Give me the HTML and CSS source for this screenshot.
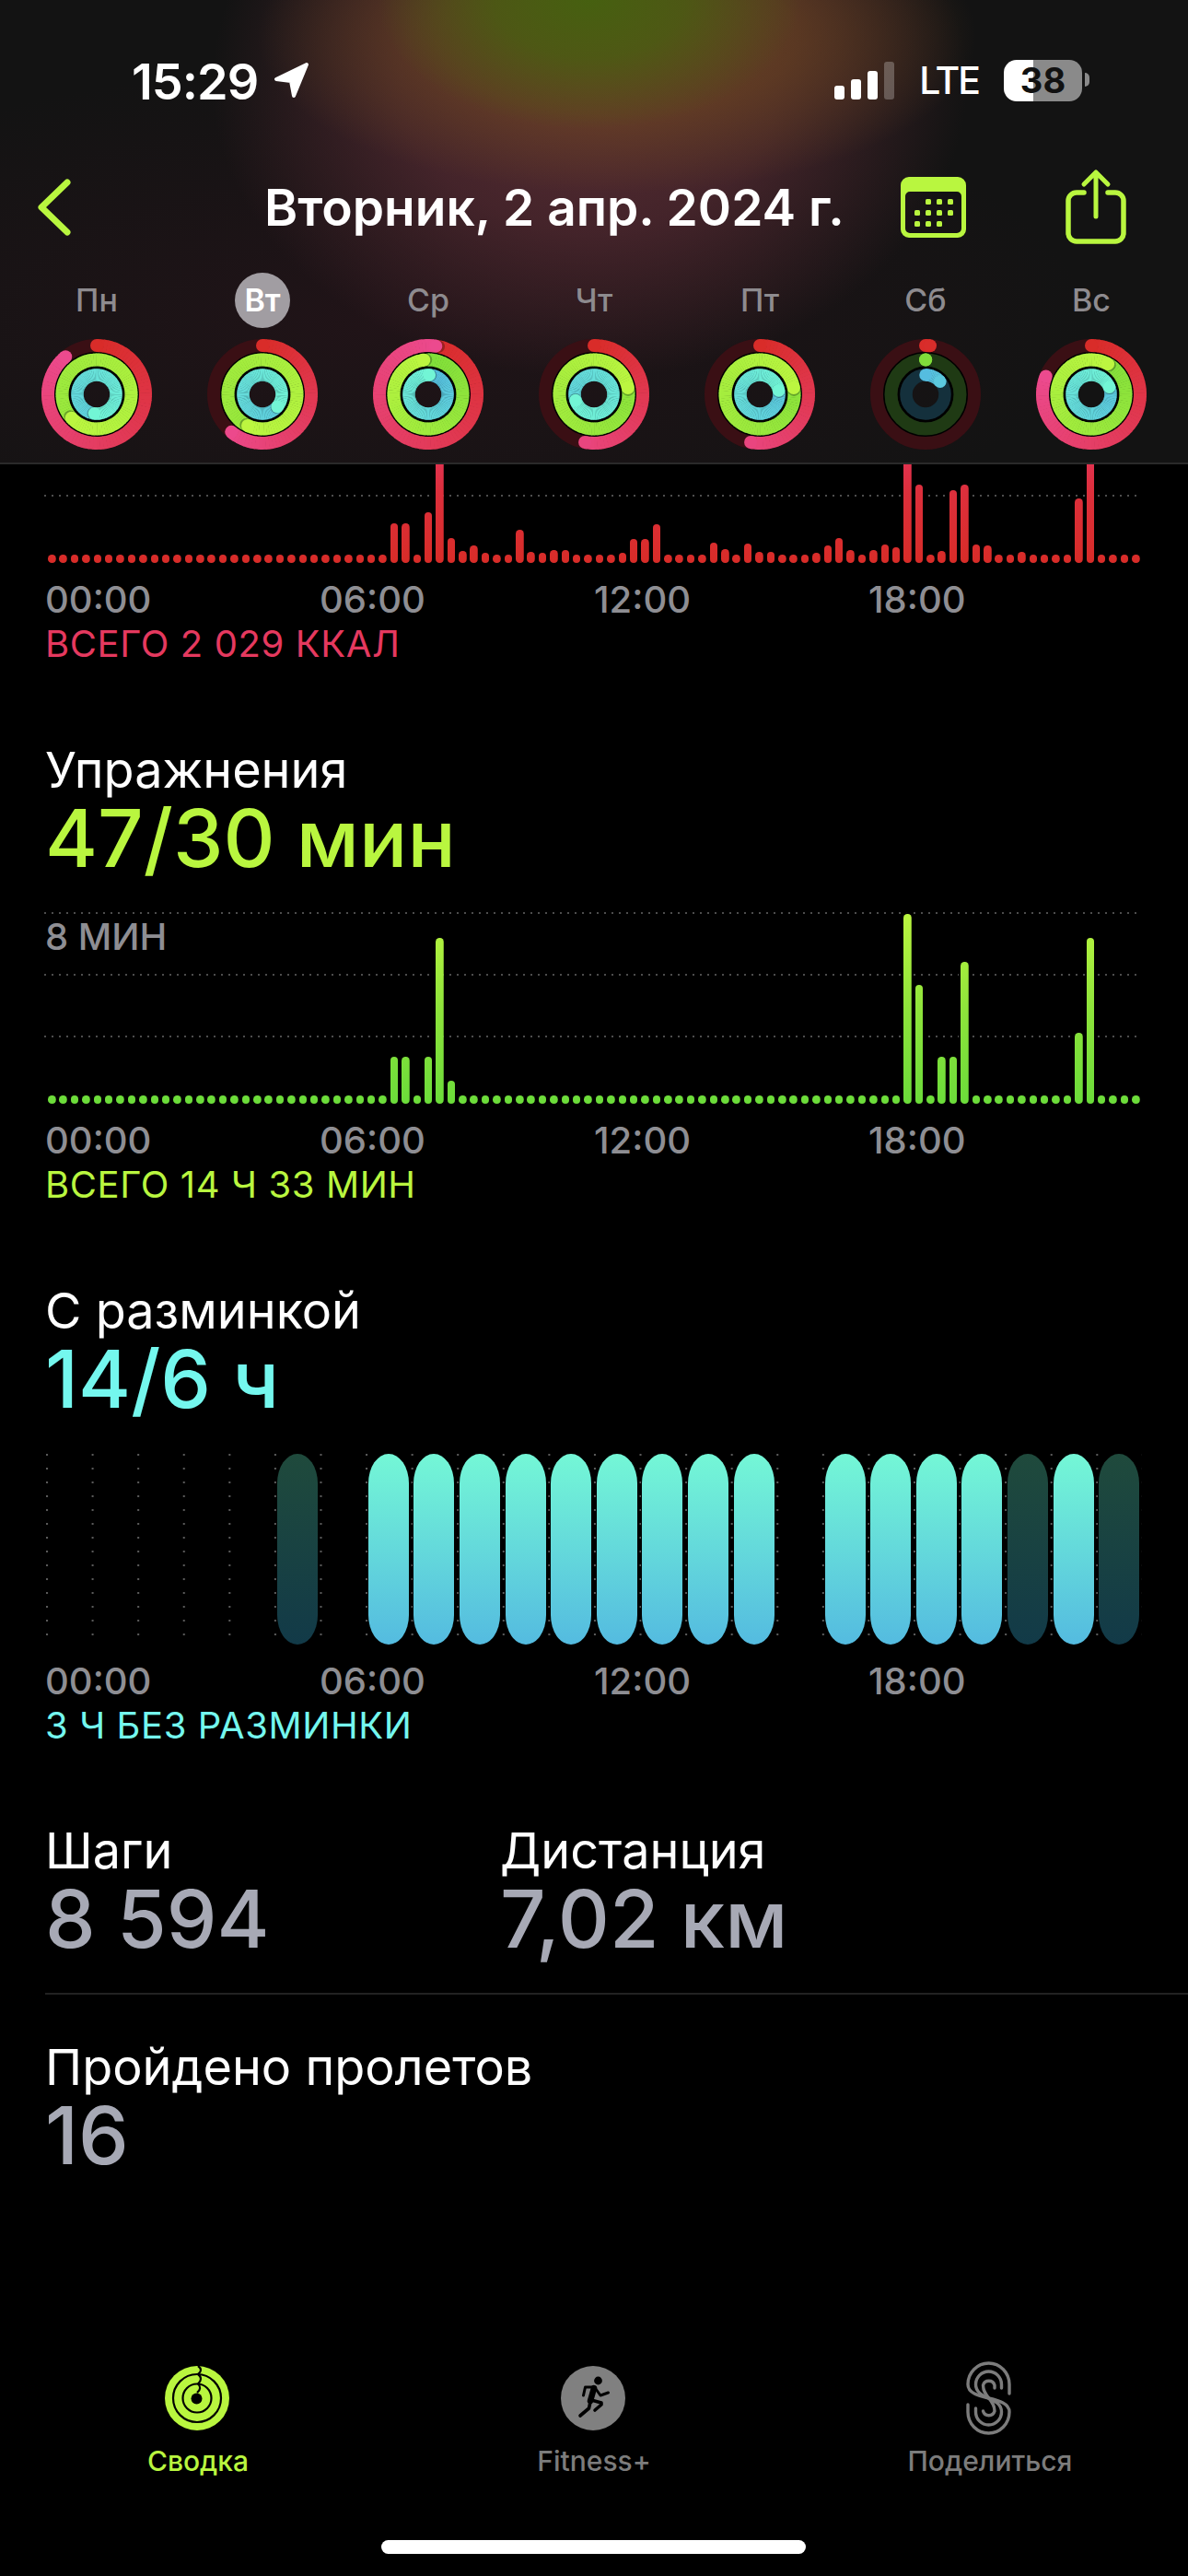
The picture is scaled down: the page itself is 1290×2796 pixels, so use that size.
FILE: index.html
```html
<!DOCTYPE html>
<html lang="ru">
<head>
    <meta charset="UTF-8">
    <title>Активность</title>
    <link rel="stylesheet" href="styles.css">
</head>
<body>
    <header class="top">
        <div class="status">
            <div class="status-left">
                <span class="clock">15:29</span>
                <svg class="loc" viewBox="0 0 40 40"><path d="M36 3 L3 19 L19 21 L22 37 Z" fill="#fff" stroke="#fff" stroke-width="4" stroke-linejoin="round"/></svg>
            </div>
            <div class="status-right">
                <div class="signal"><span class="s1"></span><span class="s2"></span><span class="s3"></span><span class="s4"></span></div>
                <span class="lte">LTE</span>
                <div class="battery">38</div>
            </div>
        </div>

        <nav class="nav">
            <svg class="back" viewBox="0 0 36 62"><path d="M32 4 L4 31 L32 58" fill="none" stroke="#b9f63f" stroke-width="7" stroke-linecap="round" stroke-linejoin="round"/></svg>
            <h1 class="nav-title">Вторник, 2 апр. 2024 г.</h1>
            <svg class="cal" viewBox="0 0 71 66">
                <path d="M9 0 H62 A9 9 0 0 1 71 9 V57 A9 9 0 0 1 62 66 H9 A9 9 0 0 1 0 57 V9 A9 9 0 0 1 9 0 Z M10 16 A5 5 0 0 0 5 21 V56 A5 5 0 0 0 10 61 H61 A5 5 0 0 0 66 56 V21 A5 5 0 0 0 61 16 Z" fill="#b9f63f" fill-rule="evenodd"/>
                <g fill="#b9f63f">
                    <rect x="27" y="24" width="6" height="6" rx="1.5"/><rect x="39" y="24" width="6" height="6" rx="1.5"/><rect x="51" y="24" width="6" height="6" rx="1.5"/>
                    <rect x="15" y="36" width="6" height="6" rx="1.5"/><rect x="27" y="36" width="6" height="6" rx="1.5"/><rect x="39" y="36" width="6" height="6" rx="1.5"/><rect x="51" y="36" width="6" height="6" rx="1.5"/>
                    <rect x="15" y="48" width="6" height="6" rx="1.5"/><rect x="27" y="48" width="6" height="6" rx="1.5"/><rect x="39" y="48" width="6" height="6" rx="1.5"/>
                </g>
            </svg>
            <svg class="share" viewBox="0 0 66 82">
                <g fill="none" stroke="#b9f63f" stroke-linecap="round" stroke-linejoin="round">
                    <path d="M20 26 H12 A9 9 0 0 0 3 35 V70 A9 9 0 0 0 12 79 H54 A9 9 0 0 0 63 70 V35 A9 9 0 0 0 54 26 H46" stroke-width="5.5"/>
                    <path d="M33 52 V4 M20 17 L33 4 L46 17" stroke-width="5"/>
                </g>
            </svg>
        </nav>

        <div class="week">
            <div class="day"><span class="day-name">Пн</span><svg class="ring" viewBox="0 0 122 122" data-rings="0.89,1.63,1.52"></svg></div>
            <div class="day"><span class="day-name current">Вт</span><svg class="ring" viewBox="0 0 122 122" data-rings="0.61,1.57,1.36"></svg></div>
            <div class="day"><span class="day-name">Ср</span><svg class="ring" viewBox="0 0 122 122" data-rings="1.025,0.98,1.01"></svg></div>
            <div class="day"><span class="day-name">Чт</span><svg class="ring" viewBox="0 0 122 122" data-rings="0.53,1.22,1.7"></svg></div>
            <div class="day"><span class="day-name">Пт</span><svg class="ring" viewBox="0 0 122 122" data-rings="0.53,1.22,1.22"></svg></div>
            <div class="day"><span class="day-name">Сб</span><svg class="ring" viewBox="0 0 122 122" data-rings="0.015,0.001,0.136"></svg></div>
            <div class="day"><span class="day-name">Вс</span><svg class="ring" viewBox="0 0 122 122" data-rings="0.81,1.08,1.19"></svg></div>
        </div>
    </header>

    <main class="content">
        <section class="block-first">
            <div class="chart chart-cal">
                <div class="gridlines"><i></i></div>
                <div class="bars bars-cal" id="bars-cal"></div>
            </div>
            <div class="axis"><span>00:00</span><span>06:00</span><span>12:00</span><span>18:00</span></div>
            <div class="total red">ВСЕГО 2 029 ККАЛ</div>
        </section>

        <section class="block">
            <div class="label">Упражнения</div>
            <div class="value lime">47/30 мин</div>
            <div class="chart chart-ex">
                <div class="gridlines"><i></i><i></i><i></i></div>
                <span class="chart-note">8 МИН</span>
                <div class="bars bars-ex" id="bars-ex"></div>
            </div>
            <div class="axis"><span>00:00</span><span>06:00</span><span>12:00</span><span>18:00</span></div>
            <div class="total lime">ВСЕГО 14 Ч 33 МИН</div>
        </section>

        <section class="block">
            <div class="label">С разминкой</div>
            <div class="value cyan">14/6 ч</div>
            <div class="stand" id="stand"></div>
            <div class="axis"><span>00:00</span><span>06:00</span><span>12:00</span><span>18:00</span></div>
            <div class="total cyan">3 Ч БЕЗ РАЗМИНКИ</div>
        </section>

        <section class="block stats">
            <div class="stat">
                <div class="label">Шаги</div>
                <div class="value grey">8 594</div>
            </div>
            <div class="stat">
                <div class="label">Дистанция</div>
                <div class="value grey">7,02 км</div>
            </div>
        </section>

        <section class="flights">
            <div class="label">Пройдено пролетов</div>
            <div class="value grey">16</div>
        </section>
    </main>

    <footer class="tabs">
        <div class="tab active">
            <svg class="tab-icon" viewBox="0 0 90 95">
                <circle cx="44" cy="48" r="35" fill="#b9f63f"/>
                <circle cx="43.5" cy="48.5" r="6" fill="#000"/>
                <g fill="none" stroke="#000" stroke-width="2.2">
                    <circle cx="44" cy="48" r="26"/>
                    <circle cx="44" cy="48" r="15.5"/>
                    <path d="M45 13 C49 16 49 19 45 22 C49 25 49 29 45 32.5 C48 35 48 39 44 42"/>
                </g>
            </svg>
            <span>Сводка</span>
        </div>
        <div class="tab">
            <svg class="tab-icon" viewBox="0 0 90 95">
                <circle cx="44" cy="48" r="35" fill="#808080"/>
                <circle cx="49.5" cy="29" r="4.4" fill="#000"/>
                <g fill="none" stroke="#000" stroke-linecap="round" stroke-linejoin="round">
                    <path d="M45 37 L41 51" stroke-width="6.5"/>
                    <path d="M44 36 H35.5 L33.5 45" stroke-width="3"/>
                    <path d="M47 38 L52 45 L60.5 42" stroke-width="3"/>
                    <path d="M41 52 L39.5 59 L30 67" stroke-width="3.6"/>
                    <path d="M42 50 L53 53 L53 55 L46 61" stroke-width="3.6"/>
                </g>
            </svg>
            <span>Fitness+</span>
        </div>
        <div class="tab">
            <svg class="tab-icon" viewBox="0 0 90 95">
                <g fill="none" stroke="#7c7c7c" stroke-width="3.4" stroke-linecap="round">
                    <path d="M66 43 V33 A22.5 23 0 0 0 21 33 C21 52 66 44 66 63 A22.5 23 0 0 1 21 63 V55"/>
                    <path d="M57.5 37 V33 A14 14 0 0 0 29.5 33 C29.5 50 57.5 46 57.5 63 A14 14 0 0 1 29.5 63 V59"/>
                    <path d="M50 37 V34 A6.5 6.5 0 0 0 37.5 34 C37.5 47 50 49 50 62 A6.5 6.5 0 0 1 37.5 62"/>
                </g>
            </svg>
            <span>Поделиться</span>
        </div>
        <div class="home-bar"></div>
    </footer>

    <script src="charts.js"></script>
</body>
</html>
```

FILE: styles.css
```css
* {
    box-sizing: border-box;
}

html, body {
    margin: 0;
    padding: 0;
}

body {
    width: 1290px;
    height: 2796px;
    background: #000;
    color: #fff;
    font-family: Inter, "Noto Sans", sans-serif;
    display: flex;
    flex-direction: column;
    overflow: hidden;
}

/* top area */
.top {
    height: 504px;
    border-bottom: 2px solid #2a2a2a;
    background-color: #131313;
    background-image:
        radial-gradient(ellipse 230px 140px at 640px 0px, rgba(70,96,16,1) 0%, rgba(70,96,16,0.75) 45%, rgba(70,96,16,0) 100%),
        radial-gradient(ellipse 390px 170px at 670px 40px, rgba(106,68,32,0.9) 0%, rgba(106,68,32,0.65) 50%, rgba(106,68,32,0) 100%),
        radial-gradient(ellipse 410px 320px at 640px 90px, rgba(90,46,52,1) 0%, rgba(84,42,50,0.72) 50%, rgba(60,30,38,0) 100%),
        radial-gradient(ellipse 760px 280px at 420px 350px, rgba(44,20,28,0.55) 0%, rgba(44,20,28,0) 100%);
    background-repeat: no-repeat;
    flex-shrink: 0;
}

.status {
    display: flex;
    justify-content: space-between;
    align-items: center;
    height: 46px;
    margin-top: 64px;
    padding: 0 115px 0 143px;
}

.status-left {
    display: flex;
    align-items: center;
    gap: 17px;
}

.clock {
    font-size: 54px;
    font-weight: 600;
    letter-spacing: -1px;
    position: relative;
    top: 1px;
}

.loc {
    width: 40px;
    height: 40px;
}

.status-right {
    display: flex;
    align-items: center;
}

.signal {
    display: flex;
    align-items: flex-end;
    gap: 7px;
    height: 41px;
}

.signal span {
    width: 11px;
    background: #fff;
    border-radius: 3px;
}

.s1 { height: 15px; }
.s2 { height: 22px; }
.s3 { height: 31px; }
.signal .s4 { height: 41px; background: rgba(255,255,255,0.25); }

.lte {
    margin-left: 27px;
    font-size: 41px;
    font-weight: 500;
    letter-spacing: -2px;
}

.battery {
    position: relative;
    width: 85px;
    height: 45px;
    margin-left: 27px;
    border-radius: 14px;
    background: linear-gradient(to right, #fff 37.6%, #8a8a8a 37.6%);
    color: #111;
    font-size: 38px;
    font-weight: 700;
    text-align: center;
    line-height: 45px;
}

.battery::after {
    content: "";
    position: absolute;
    left: 88px;
    top: 14px;
    width: 5px;
    height: 15px;
    border-radius: 0 8px 8px 0;
    background: #8a8a8a;
}

.nav {
    display: flex;
    align-items: center;
    height: 90px;
    margin-top: 70px;
    padding-left: 41px;
}

.back {
    width: 36px;
    height: 62px;
    flex-shrink: 0;
}

.nav-title {
    margin: 0 0 0 210px;
    width: 691px;
    font-size: 55px;
    font-weight: 600;
    white-space: nowrap;
}

.cal {
    width: 71px;
    height: 66px;
    flex-shrink: 0;
}

.share {
    width: 66px;
    height: 82px;
    margin-left: 108px;
    margin-bottom: 3px;
    flex-shrink: 0;
}

.week {
    display: grid;
    grid-template-columns: repeat(7, 180px);
    padding: 0 15px;
    margin-top: 26px;
}

.day {
    display: flex;
    flex-direction: column;
    align-items: center;
    gap: 11px;
}

.day-name {
    width: 60px;
    height: 60px;
    border-radius: 50%;
    color: #8e8b8f;
    font-size: 34px;
    font-weight: 500;
    line-height: 60px;
    text-align: center;
}

.day-name.current {
    background: #a19da2;
    color: #fff;
    font-weight: 600;
}

.ring {
    width: 122px;
    height: 122px;
}

/* scrolled part */
.content {
    flex: 1;
    overflow: hidden;
}

.block {
    margin-top: 85px;
    padding-left: 49px;
}

.block-first {
    padding-left: 49px;
}

.label {
    font-size: 54px;
    line-height: 60px;
}

.value {
    font-size: 87px;
    font-weight: 500;
    line-height: 88px;
}

.lime { color: #b9f63f; }
.cyan { color: #74f7ee; }
.red { color: #e5395f; }
.grey { color: #a7a9b5; }

.chart {
    position: relative;
    width: 1192px;
    margin-left: -1px;
    overflow: hidden;
}

.chart-cal {
    height: 107px;
}

.chart-ex {
    height: 208px;
    margin-top: 36px;
}

.gridlines {
    position: absolute;
    left: 0;
    right: 0;
    top: 0;
    display: flex;
    flex-direction: column;
    gap: 65px;
}

.chart-cal .gridlines {
    top: 33px;
}

.gridlines i {
    display: block;
    height: 2px;
    background: linear-gradient(to right, #4d4d4d 2px, transparent 2px);
    background-size: 8px 2px;
}

.chart-note {
    position: absolute;
    left: 1px;
    top: 5px;
    color: #8e8e93;
    font-size: 40px;
    font-weight: 500;
    line-height: 44px;
}

.bars {
    position: absolute;
    left: 4px;
    right: 2px;
    bottom: 0;
    height: 100%;
    display: flex;
    justify-content: space-between;
    align-items: flex-end;
}

.bars span {
    width: 8.5px;
    border-radius: 4.25px;
    background-repeat: no-repeat;
    background-position: bottom;
}

.bars span.tall {
    box-shadow: 0 0 0 2px #000;
}

.bars-cal span {
    background-image: linear-gradient(to top, #d82c28 0%, #dd2f3c 60%, #e5345c 100%);
    background-size: 100% 130px;
}

.bars-ex span {
    background-image: linear-gradient(to top, #6bdc3a 0%, #8fe43b 50%, #bcf640 100%);
    background-size: 100% 208px;
}

.stand {
    display: grid;
    grid-template-columns: repeat(24, 1fr);
    width: 1190px;
    height: 207px;
    margin-top: 37px;
    margin-left: 1px;
    background-image: radial-gradient(circle at 1px 1px, #5a5a5a 1px, transparent 1.6px);
    background-size: 49.58px 15px;
}

.stand span {
    justify-self: center;
    width: 44px;
    border-radius: 22px / 32px;
    background: linear-gradient(to bottom, #74f7d6 0%, #54bbe0 100%);
    box-shadow: 0 0 0 1px #000;
}

.stand span.dim {
    background: linear-gradient(to bottom, #1f4a3c 0%, #123a48 100%);
}

.stand span.off {
    background: none;
    box-shadow: none;
}

.axis {
    display: grid;
    grid-template-columns: repeat(4, 298px);
    margin-top: 18px;
    color: #8e8e93;
    font-size: 40px;
    font-weight: 500;
    line-height: 44px;
}

.total {
    margin-top: 4px;
    font-size: 40px;
    line-height: 44px;
    letter-spacing: 0.6px;
}

.stats {
    display: flex;
    margin-top: 84px;
    margin-left: 49px;
    padding-left: 0;
    padding-bottom: 36px;
    border-bottom: 2px solid #222;
}

.stat {
    width: 494px;
}

.flights {
    padding: 49px 0 0 49px;
}

/* tab bar */
.tabs {
    position: relative;
    display: grid;
    grid-template-columns: repeat(3, 430px);
    height: 241px;
    flex-shrink: 0;
}

.tab {
    display: flex;
    flex-direction: column;
    align-items: center;
    color: #7c7c7c;
    font-size: 30px;
    font-weight: 500;
}

.tab.active {
    color: #b9f63f;
}

.tab-icon {
    width: 90px;
    height: 95px;
}

.tab span {
    margin-top: 1px;
    line-height: 40px;
}

.home-bar {
    position: absolute;
    left: 414px;
    bottom: 24px;
    width: 461px;
    height: 15px;
    border-radius: 8px;
    background: #fff;
}
```

FILE: charts.js
```js
const SVG_NS = 'http://www.w3.org/2000/svg';

// bar heights in px by slot, everything else is the base dot
const calBars = {
    30: 43, 31: 43, 33: 55, 34: 130, 35: 27, 36: 13, 37: 19, 38: 11, 41: 36, 42: 12, 43: 11, 44: 14, 45: 14,
    50: 11, 51: 26, 52: 26, 53: 42, 58: 22, 59: 15, 61: 21, 62: 12, 63: 12, 67: 11, 68: 19, 69: 27, 70: 14,
    72: 14, 73: 20, 74: 17, 75: 130, 76: 85, 78: 13, 79: 79, 80: 85, 81: 20, 82: 19, 85: 12, 90: 70, 91: 130
};
const exBars = {
    30: 51, 31: 51, 33: 51, 34: 180, 35: 25, 75: 206, 76: 129, 78: 51, 79: 51, 80: 154, 90: 77, 91: 180
};
const standHours = [0, 0, 0, 0, 0, 1, 0, 2, 2, 2, 2, 2, 2, 2, 2, 2, 0, 2, 2, 2, 2, 1, 2, 1];

function fillBars(id, data) {
    const box = document.getElementById(id);
    for (let i = 0; i < 96; i++) {
        const bar = document.createElement('span');
        const h = data[i] || 9.5;
        bar.style.height = h + 'px';
        if (h > 30) bar.classList.add('tall');
        box.appendChild(bar);
    }
}

function fillStand() {
    const box = document.getElementById('stand');
    standHours.forEach(v => {
        const bar = document.createElement('span');
        if (v === 0) bar.className = 'off';
        if (v === 1) bar.className = 'dim';
        box.appendChild(bar);
    });
}

function hex(c) {
    return [1, 3, 5].map(i => parseInt(c.slice(i, i + 2), 16));
}

function mix(a, b, t) {
    const ca = hex(a), cb = hex(b);
    return 'rgb(' + ca.map((v, i) => Math.round(v + (cb[i] - v) * t)).join(',') + ')';
}

function point(r, deg) {
    const a = (deg - 90) * Math.PI / 180;
    return [61 + r * Math.cos(a), 61 + r * Math.sin(a)];
}

function add(svg, name, attrs) {
    const el = document.createElementNS(SVG_NS, name);
    for (const k in attrs) el.setAttribute(k, attrs[k]);
    svg.appendChild(el);
    return el;
}

function drawRing(svg, cfg, frac) {
    add(svg, 'circle', { cx: 61, cy: 61, r: cfg.r, fill: 'none', stroke: cfg.track, 'stroke-width': cfg.w });

    const end = frac * 360;
    const from = Math.max(0, end - 360);
    const step = 4;
    // short arcs keep their colour from how far round they are, small progress never reaches the end colour
    const reach = Math.min(1, frac * 1.6);
    for (let a = from; a < end; a += step) {
        const b = Math.min(a + step + 0.6, end);
        const p1 = point(cfg.r, a), p2 = point(cfg.r, b);
        add(svg, 'path', {
            d: `M${p1[0]} ${p1[1]} A${cfg.r} ${cfg.r} 0 0 1 ${p2[0]} ${p2[1]}`,
            fill: 'none',
            stroke: mix(cfg.from, cfg.to, a / end * reach),
            'stroke-width': cfg.w
        });
    }

    if (frac < 1) {
        const s = point(cfg.r, 0);
        add(svg, 'circle', { cx: s[0], cy: s[1], r: cfg.w / 2, fill: cfg.from });
    }
    // soft shadow in front of the ring head, only when it overlaps itself
    if (frac > 0.9) {
        const sh = point(cfg.r, end + 3);
        add(svg, 'circle', { cx: sh[0], cy: sh[1], r: cfg.w / 2, fill: 'rgba(0,0,0,0.28)' });
    }
    const h = point(cfg.r, end);
    add(svg, 'circle', { cx: h[0], cy: h[1], r: cfg.w / 2, fill: mix(cfg.from, cfg.to, reach) });
}

const ringCfg = [
    { r: 53, w: 14, track: '#3a0f14', from: '#d92c29', to: '#ec4a8e' },
    { r: 37.5, w: 14, track: '#1f3a14', from: '#80de3a', to: '#bcf640' },
    { r: 21, w: 13.5, track: '#14303c', from: '#55bde0', to: '#72f5d5' }
];

function fillRings() {
    document.querySelectorAll('.ring').forEach(svg => {
        // black gaps between the three rings
        add(svg, 'circle', { cx: 61, cy: 61, r: 45.2, fill: 'none', stroke: '#000', 'stroke-width': 2.4 });
        add(svg, 'circle', { cx: 61, cy: 61, r: 29.1, fill: 'none', stroke: '#000', 'stroke-width': 3.2 });
        const values = svg.dataset.rings.split(',').map(Number);
        values.forEach((v, i) => drawRing(svg, ringCfg[i], v));
    });
}

fillBars('bars-cal', calBars);
fillBars('bars-ex', exBars);
fillStand();
fillRings();
```
